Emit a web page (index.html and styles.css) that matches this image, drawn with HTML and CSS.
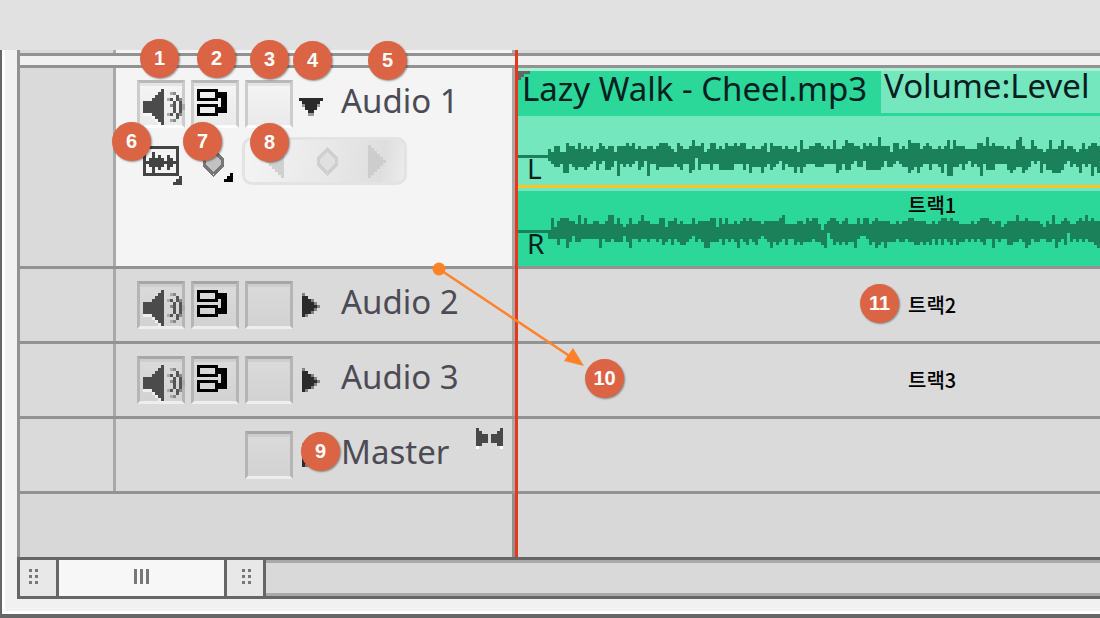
FILE: index.html
```html
<!DOCTYPE html>
<html lang="ko">
<head>
<meta charset="utf-8">
<title>Audio tracks</title>
<link rel="stylesheet" href="styles.css">
</head>
<body>
<svg class="defs" aria-hidden="true">
  <symbol id="speaker" viewBox="0 0 16 16">
    <path fill="#fff" opacity=".6" d="M2 11h3v1h-3zM5 12h1v1h-1zM6 13h1v1h-1zM7 14h1v1h-1z"/>
    <path fill="#4b4b4b" d="M2 7h3v-1h1v-1h1v-1h1v-1h1v12h-1v-1h-1v-1h-1v-1h-1v-1h-3z"/>
    <path fill="#555" d="M12 7h1v4h-1zM14 7h1v4h-1zM13 5h1v2h-1zM13 11h1v2h-1zM11 6h1v1h-1zM11 11h1v1h-1z"/>
    <path fill="#888" d="M12 4h1v1h-1zM12 13h1v1h-1zM14 6h1v1h-1zM14 11h1v1h-1zM11 8h1v1h-1z"/>
    <path fill="#aaa" d="M10 6h1v1h-1zM10 11h1v1h-1zM11 4h1v1h-1zM11 13h1v1h-1zM15 8h1v2h-1z"/>
  </symbol>
  <symbol id="output" viewBox="0 0 16 16">
    <path fill="#000" fill-rule="evenodd" d="M2 3h7v1h3v7h-3v1h-7v-4h7v1h1v-3h-1v1h-7zM3 4v2h5v-2zM3 9v2h5v-2z"/>
  </symbol>
  <symbol id="right" viewBox="0 0 8 8">
    <path fill="#2b2b2b" d="M1 1h2v1h1v1h1v1h1v1h-1v1h-1v1h-2v1h-1z"/>
    <path fill="#2b2b2b" opacity=".5" d="M1 0h1v1h-1zM4 2h1v1h-1zM5 3h1v1h-1zM6 4h1v1h-1zM5 5h1v1h-1zM4 6h1v1h-1zM2 7h1v1h-1z"/>
  </symbol>
  <symbol id="down" viewBox="0 0 8 8">
    <path fill="#2b2b2b" d="M0 2h8v1h-1v1h-1v2h-1v1h-2v-1h-1v-2h-1v-1h-1z"/>
    <path fill="#2b2b2b" opacity=".45" d="M1 4h1v1h-1zM6 4h1v1h-1zM3 7h2v1h-2z"/>
  </symbol>
  <symbol id="grip" viewBox="0 0 3 5">
    <path fill="#777" d="M0 0h1v1h-1zM2 0h1v1h-1zM0 2h1v1h-1zM2 2h1v1h-1zM0 4h1v1h-1zM2 4h1v1h-1z"/>
  </symbol>
</svg>

<header class="topbar"></header>
<main class="panel">
  <section class="timeline">
    <div class="row sliver"><div class="gutter"></div><div class="head active"></div><div class="lane"></div></div>
    <div class="divider"></div>

    <div class="row track">
      <div class="gutter"></div>
      <div class="head active">
        <div class="controls">
          <button class="box" aria-label="Mute Audio 1"><svg class="icon"><use href="#speaker"/></svg></button>
          <button class="box" aria-label="Output Audio 1"><svg class="icon"><use href="#output"/></svg></button>
          <button class="box" aria-label="Lock Audio 1"></button>
          <button class="twist" aria-label="Collapse Audio 1"><svg class="arrow"><use href="#down"/></svg></button>
          <span class="name">Audio 1</span>
        </div>
        <div class="tools">
          <button class="tool" aria-label="Display style">
            <svg class="tool-icon" viewBox="0 0 13 13"><path fill="#444" fill-rule="evenodd" d="M0 0h12v10h-12zM1 1v4h1v-1h1v-2h1v2h1v-1h1v1h1v1h1v-2h1v1h1v1h1v-4zM1 6v3h2v-2h-1v-1zM11 6h-1v1h-1v1h-1v-2h-1v1h-1v1h-1v-1h-1v2h7z"/><path fill="#444" d="M12 10h1v3h-3v-1h1v-1h1z"/></svg>
          </button>
          <button class="tool" aria-label="Keyframe display">
            <svg class="tool-icon" viewBox="0 0 13 13"><path fill="#c2c2c2" stroke="#777" d="M5.500 1.500L8.500 4.500V6.500L5.500 9.500L2.500 6.500V4.500z"/><path fill="#000" d="M11 9h1v3h-3v-1h1v-1h1z"/></svg>
          </button>
          <div class="pill">
            <button class="step" aria-label="Previous keyframe"><svg class="step-icon" viewBox="0 0 7 11"><path fill="#d0d0d0" d="M6 0h-1v1h-1v1h-1v1h-1v1h-1v1h-1v1h1v1h1v1h1v1h1v1h1v1h1z"/></svg></button>
            <button class="step" aria-label="Add keyframe"><svg class="step-icon" viewBox="0 0 7 11"><path fill="#e0e0e0" stroke="#cfcfcf" d="M3.500 1.500L6.500 4.500V6.500L3.500 9.500L.5 6.500V4.500z"/></svg></button>
            <button class="step" aria-label="Next keyframe"><svg class="step-icon" viewBox="0 0 7 11"><path fill="#cdcdcd" d="M0 0h1v1h1v1h1v1h1v1h1v1h1v1h-1v1h-1v1h-1v1h-1v1h-1v1h-1z"/></svg></button>
          </div>
        </div>
      </div>
      <div class="lane">
        <div class="clip">
          <div class="clip-bar">
            <span class="clip-name">Lazy Walk - Cheel.mp3</span>
            <span class="clip-fx">Volume:Level</span>
            <svg class="fade" viewBox="0 0 4 4"><path fill="#666" d="M0 0h4v1h-2v1h-1v1h-1z"/></svg>
          </div>
          <div class="channel left"><svg class="wave" id="wave-l"></svg><span class="side">L</span></div>
          <div class="channel right"><svg class="wave" id="wave-r"></svg><span class="side">R</span><span class="note on-clip">트랙1</span></div>
        </div>
      </div>
    </div>

    <div class="row track">
      <div class="gutter"></div>
      <div class="head">
        <div class="controls">
          <button class="box" aria-label="Mute Audio 2"><svg class="icon"><use href="#speaker"/></svg></button>
          <button class="box" aria-label="Output Audio 2"><svg class="icon"><use href="#output"/></svg></button>
          <button class="box" aria-label="Lock Audio 2"></button>
          <button class="twist" aria-label="Expand Audio 2"><svg class="arrow"><use href="#right"/></svg></button>
          <span class="name">Audio 2</span>
        </div>
      </div>
      <div class="lane"><span class="note">트랙2</span></div>
    </div>

    <div class="row track">
      <div class="gutter"></div>
      <div class="head">
        <div class="controls">
          <button class="box" aria-label="Mute Audio 3"><svg class="icon"><use href="#speaker"/></svg></button>
          <button class="box" aria-label="Output Audio 3"><svg class="icon"><use href="#output"/></svg></button>
          <button class="box" aria-label="Lock Audio 3"></button>
          <button class="twist" aria-label="Expand Audio 3"><svg class="arrow"><use href="#right"/></svg></button>
          <span class="name">Audio 3</span>
        </div>
      </div>
      <div class="lane"><span class="note">트랙3</span></div>
    </div>

    <div class="row track">
      <div class="gutter"></div>
      <div class="head">
        <div class="controls master">
          <button class="box" aria-label="Lock Master"></button>
          <button class="twist" aria-label="Expand Master"><svg class="arrow"><use href="#right"/></svg></button>
          <span class="name">Master</span>
          <svg class="bowtie" viewBox="0 0 9 7"><path fill="#fff" d="M0 6h1v-1h1v-1h2v1h-2v1h-1v1h-1zM9 6h-1v-1h-1v-1h-2v1h2v1h1v1h1z"/><path fill="#484848" d="M0 0h1v1h1v1h2v3h-2v1h-2zM9 0h-1v1h-1v1h-2v3h2v1h2z"/></svg>
        </div>
      </div>
      <div class="lane"></div>
    </div>

    <div class="row empty"><div class="blank"></div><div class="lane"></div></div>
    <div class="playhead"></div>
  </section>

  <div class="scrollbar">
    <button class="handle" aria-label="Zoom start"><svg class="grip"><use href="#grip"/></svg></button>
    <button class="thumb" aria-label="Scroll"><svg class="bars" viewBox="0 0 5 5"><path fill="#777" d="M0 0h1v5h-1zM2 0h1v5h-1zM4 0h1v5h-1z"/></svg></button>
    <button class="handle end" aria-label="Zoom end"><svg class="grip"><use href="#grip"/></svg></button>
    <div class="scroll-track"></div>
  </div>
</main>

<div class="callouts">
  <svg class="pointer" viewBox="0 0 160 110"><path stroke="#ff8228" stroke-width="2.500" d="M9 9L144 99"/><circle cx="9" cy="9" r="6.500" fill="#ff8228"/><path fill="#ff8228" d="M154 106L134 101L143 88z"/></svg>
  <span class="badge b1">1</span><span class="badge b2">2</span><span class="badge b3">3</span>
  <span class="badge b4">4</span><span class="badge b5">5</span><span class="badge b6">6</span>
  <span class="badge b7">7</span><span class="badge b8">8</span><span class="badge b9">9</span>
  <span class="badge b10">10</span><span class="badge b11">11</span>
</div>
<script src="wave.js"></script>
</body>
</html>
```
FILE: styles.css
```css
* { box-sizing: border-box; }
body { margin: 0; min-height: 100vh; display: flex; flex-direction: column; position: relative; overflow: hidden; background: #e1e1e1; font-family: "Noto Sans", "Noto Sans CJK KR", sans-serif; }
button { margin: 0; padding: 0; border: 0; background: none; font: inherit; display: block; }
svg { display: block; flex: none; shape-rendering: crispEdges; }
.defs { display: none; }
.topbar { height: 50px; flex: none; background: #e1e1e1; }

.panel { flex: 1; display: flex; flex-direction: column; padding: 0 0 12px 12px; background: #f1f1f1; border-left: 3px solid #fff; border-bottom: 3px solid #fff; margin: 0 0 4px 2px; box-shadow: 0 0 0 4px #666; clip-path: inset(0 0 -4px -2px); }
.timeline { flex: 1; display: flex; flex-direction: column; position: relative; border-left: 3px solid #929292; }
.row { display: grid; grid-template-columns: 96px 399px 1fr; border-bottom: 3px solid #929292; background: #dadada; }
.sliver { height: 6px; }
.divider { height: 12px; background: #f1f1f1; border-bottom: 3px solid #929292; }
.gutter { border-right: 3px solid #a9a9a9; }
.head { border-right: 3px solid #a9a9a9; padding: 12px 9px 12px 21px; }
.head.active { background: #f4f4f4; }
.sliver .head { padding: 0; }
.lane { min-width: 0; padding-left: 3px; display: flex; align-items: center; }
.empty { flex: 1; grid-template-columns: 495px 1fr; background: #d8d8d8; border-bottom: 0; }
.blank { border-right: 3px solid #8e8e8e; }
.playhead { position: absolute; left: 495px; top: 0; bottom: 0; width: 3px; background: #e8381c; }

.controls { display: flex; gap: 6px; }
.master { padding-left: 108px; }
.box { width: 48px; height: 48px; flex: none; border: 3px solid #b5b5b5; border-top-color: #a6a6a6; border-bottom-color: #eee; background: linear-gradient(#cecece 3px, #dadada 3px, #d2d2d2); }
.active .box { border-color: #ccc; border-top-color: #b9b9b9; border-bottom-color: #fcfcfc; background: linear-gradient(#e4e4e4 3px, #f4f4f4 3px, #eaeaea); }
.icon { width: 48px; height: 48px; margin: -3px; }
.twist { width: 24px; height: 24px; margin-top: 12px; flex: none; }
.arrow { width: 24px; height: 24px; }
.name { margin-left: 12px; font-size: 33px; line-height: 42px; color: #4c4b55; white-space: nowrap; }
.bowtie { width: 27px; height: 21px; margin-left: auto; margin-top: -3px; }

.tools { display: flex; align-items: center; padding: 9px 0 69px 6px; gap: 15px; }
.tool-icon { width: 39px; height: 39px; }
.tools .tool { margin-top: 9px; }
.pill { width: 165px; height: 48px; display: flex; align-items: center; justify-content: space-between; padding: 0 15px 0 21px; margin-left: -9px; border: 3px solid #e3e3e3; border-radius: 10px; background: linear-gradient(100deg, #f4f4f4, #e6e6e6 60%, #dedede 85%, #ececec); }
.step-icon { width: 21px; height: 33px; }

.clip { align-self: stretch; flex: 1; min-width: 0; border-top: 3px solid #a8efd3; background: #2bd799; color: #07201f; }
.clip-bar { display: flex; height: 45px; position: relative; padding-left: 4px; white-space: nowrap; font-size: 33px; }
.clip-name { width: 359px; flex: none; line-height: 36px; }
.clip-fx { flex: 1; height: 42px; padding-left: 3px; line-height: 30px; background: #75e7be; }
.fade { position: absolute; left: 0; top: 0; width: 12px; height: 12px; }
.channel { height: 75px; position: relative; }
.left { background: linear-gradient(#75e7be 69px, #fac524 69px, #fac524 72px, #75e7be 72px); }
.wave { width: 100%; height: 75px; }
.side { position: absolute; left: 9px; top: 36px; font-size: 28px; line-height: 32px; }

.note { padding-left: 390px; font: 500 20px/24px "Noto Sans CJK KR", sans-serif; color: #000; white-space: nowrap; }
.on-clip { position: absolute; left: 0; top: 2px; }

.scrollbar { display: flex; height: 42px; flex: none; border: 3px solid #666; border-right: 0; background: #666; gap: 3px; }
.handle { width: 36px; background: #e8e8e8; padding: 9px 0 0 9px; }
.handle.end { padding-left: 15px; }
.grip { width: 9px; height: 15px; }
.thumb { width: 165px; background: #f7f7f7; padding: 9px 75px 0; }
.bars { width: 15px; height: 15px; }
.handle, .thumb { display: flex; align-items: flex-start; }
.scroll-track { flex: 1; background: #d9d9d9; border: 3px solid #a9a9a9; border-width: 3px 0; }

.callouts { position: absolute; inset: 0; pointer-events: none; }
.callouts .pointer { position: absolute; left: 430px; top: 260px; width: 160px; height: 110px; shape-rendering: auto; }
.badge { position: absolute; width: 39px; height: 39px; border-radius: 50%; background: #db6445; color: #fff; font: bold 20px/39px "Liberation Sans", Arial, sans-serif; text-align: center; box-shadow: 1px 1px 2px #0006; }
.b1 { left: 140px; top: 39px; }
.b2 { left: 197px; top: 39px; }
.b3 { left: 250px; top: 40px; }
.b4 { left: 293px; top: 41px; }
.b5 { left: 368px; top: 41px; }
.b6 { left: 112px; top: 122px; }
.b7 { left: 183px; top: 122px; }
.b8 { left: 250px; top: 123px; }
.b9 { left: 301px; top: 432px; }
.b10 { left: 585px; top: 359px; }
.b11 { left: 860px; top: 284px; }
```
FILE: wave.js
```js
// Peaks above and below the centre line, one digit per 3px column.
const waves = {
  'wave-l': {
    up: '21331143324232312432331333434232233234443214322353341244232433434' + '422322341433323223152233443232522354433243433633314423254442' + '343223235253332222443634333232256322532212522352332124234434430',
    down: '12332552343343214214431623232143162243333323422540422242244444' + '22242533353243214233535322233322225424421331444443133212335435' + '322422352663324213236244422224543354312152445554213235232635'
  },
  'wave-r': {
    up: '0413444332524223322355242124223533222441334232224233334414242' + '23234343332333334522223324344202344323422242442343333223233443' + '33322323443433222232344432331233353343333213252234322343534333',
    down: '2224225313322222252332333135223223223243242344321323553332423' + '23523423421235343242243433323345024343433521124354353332332334434' + '342424234243323232342252322443323542332233253240323232334554332'
  }
};
const unit = 3, centre = 39, start = 30;
for (const [id, w] of Object.entries(waves)) {
  const n = Math.min(w.up.length, w.down.length);
  let d = `M0 ${centre}h${start + unit}v${unit}H0z`;
  for (let i = 0; i < n; i++) {
    const x = start + i * unit;
    const top = centre - w.up[i] * unit;
    const bottom = centre + unit + w.down[i] * unit;
    d += `M${x} ${top}h${unit}V${bottom}h-${unit}z`;
  }
  const path = document.createElementNS('http://www.w3.org/2000/svg', 'path');
  path.setAttribute('d', d);
  path.setAttribute('fill', '#1a815b');
  document.getElementById(id).append(path);
}
```
